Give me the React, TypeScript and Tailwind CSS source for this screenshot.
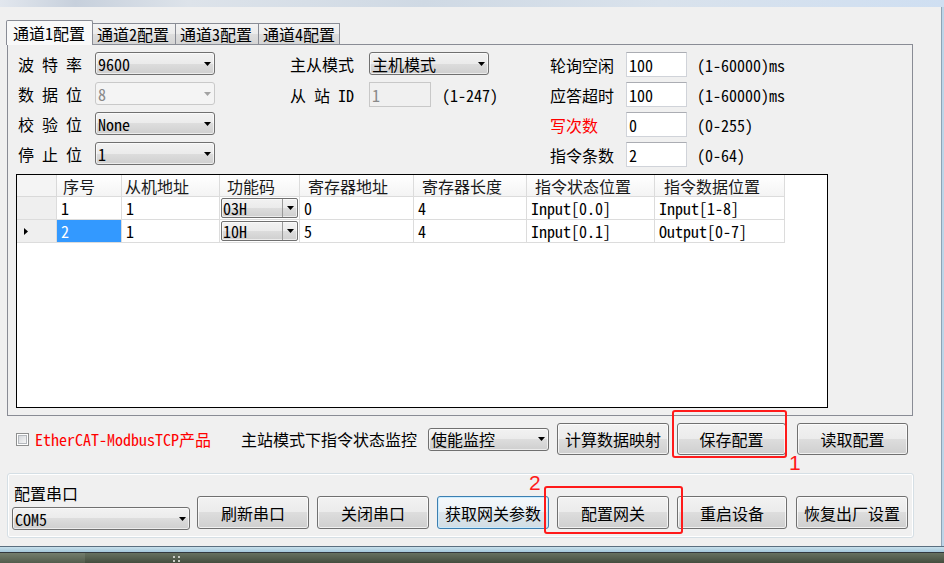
import React from "react";

const F = "font-['Noto_Sans_Mono_CJK_SC','Noto_Sans_CJK_SC',sans-serif]";
const BTN_BG = "bg-[linear-gradient(to_bottom,#f2f2f2,#ebebeb_50%,#dddddd_50%,#cfcfcf)]";

function Arrow({ gray = false }: { gray?: boolean }) {
  return (
    <svg width="7" height="4" viewBox="0 0 7 4" className="shrink-0">
      <path d="M0 0H7L3.5 4Z" fill={gray ? "#a3a3a3" : "#000"} />
    </svg>
  );
}

function Combo({ value, className = "", disabled = false }: { value: string; className?: string; disabled?: boolean }) {
  return (
    <div
      className={`flex items-center justify-between rounded-[3px] border pl-[2px] pr-[3px] ${
        disabled
          ? "border-[#c9c9c9] bg-[#f4f4f4] text-[#8a8a8a]"
          : "border-[#707070] bg-[linear-gradient(to_bottom,#f2f2f2,#ebebeb_50%,#dddddd_50%,#cfcfcf)] shadow-[inset_0_0_0_1px_rgba(255,255,255,0.6)]"
      } ${className}`}
    >
      <span className="leading-[18px]">{value}</span>
      <Arrow gray={disabled} />
    </div>
  );
}

function TextBox({ value, className = "", disabled = false }: { value: string; className?: string; disabled?: boolean }) {
  return (
    <div
      className={`flex items-center border pl-[2px] leading-[18px] ${
        disabled ? "border-[#c8c8c8] bg-[#f0f0f0] text-[#8a8a8a]" : "border-[#d0d3d9] border-t-[#abadb3] bg-white"
      } ${className}`}
    >
      {value}
    </div>
  );
}

function Btn({ label, className = "", focus = false }: { label: string; className?: string; focus?: boolean }) {
  return (
    <div
      className={`flex items-center justify-center rounded-[3px] border leading-[18px] ${
        focus
          ? "border-[#3c7fb1] bg-[linear-gradient(to_bottom,#f4f8fb,#eaf1f6_50%,#dde6ec_50%,#d2dde4)] shadow-[inset_0_0_0_1px_rgba(200,235,255,0.9)]"
          : "border-[#707070] bg-[linear-gradient(to_bottom,#f2f2f2,#ebebeb_50%,#dddddd_50%,#cfcfcf)] shadow-[inset_0_0_0_1px_rgba(255,255,255,0.7)]"
      } ${className}`}
    >
      {label}
    </div>
  );
}

function Spaced({ chars, className = "" }: { chars: string[]; className?: string }) {
  return (
    <div className={`flex w-[64px] justify-between ${className}`}>
      {chars.map((c, i) => (
        <span key={i}>{c}</span>
      ))}
    </div>
  );
}

function CellCombo({ value }: { value: string }) {
  return (
    <div className="flex h-full w-full items-stretch rounded-[2px] border border-[#707070] bg-[linear-gradient(to_bottom,#f2f2f2,#ebebeb_50%,#dddddd_50%,#cfcfcf)] shadow-[inset_0_0_0_1px_rgba(255,255,255,0.6)]">
      <div className="flex flex-1 items-center pl-[1px] leading-[18px]">{value}</div>
      <div className="flex w-[15px] items-center justify-center border-l border-[#9a9a9a]">
        <Arrow />
      </div>
    </div>
  );
}

const colW = ["w-[65px]", "w-[98px]", "w-[80px]", "w-[114px]", "w-[113px]", "w-[128px]", "w-[130px]"];
const headPl = ["pl-[6px]", "pl-[3px]", "pl-[7px]", "pl-[8px]", "pl-[8px]", "pl-[8px]", "pl-[9px]"];
const heads = ["序号", "从机地址", "功能码", "寄存器地址", "寄存器长度", "指令状态位置", "指令数据位置"];
const rows = [
  ["1", "1", "03H", "0", "4", "Input[0.0]", "Input[1-8]"],
  ["2", "1", "10H", "5", "4", "Input[0.1]", "Output[0-7]"],
];

export default function App() {
  return (
    <div className={`${F} flex h-[563px] w-[944px] flex-col overflow-hidden bg-[#f0f0f0] text-[16px] leading-[18px] text-black`}>
      {/* top title strip */}
      <div className="h-[7px] shrink-0 bg-[linear-gradient(to_right,#e2e7ee,#c7d0dc_8%,#dde3ea_20%,#cfd9e4_45%,#d9e2ec_70%,#cfdff2)]" />

      <div className="flex min-h-0 flex-1">
        <div className="flex w-[941px] flex-col">
          {/* tabs */}
          <div className="mt-[13px] flex h-[24px] items-end pl-[6px]">
            <div className="relative z-10 -mb-[1px] flex h-[25px] w-[87px] items-center rounded-t-[2px] border border-b-0 border-[#898c95] bg-[#f9f9f9] pl-[6px]">
              通道1配置
            </div>
            <div className="flex h-[21px] w-[83px] items-center border border-l-0 border-b-0 border-[#898c95] bg-[linear-gradient(to_bottom,#f3f3f3,#ebebeb_50%,#dedede_50%,#d4d4d4)] pl-[4px]">
              通道2配置
            </div>
            <div className="flex h-[21px] w-[83px] items-center border border-l-0 border-b-0 border-[#898c95] bg-[linear-gradient(to_bottom,#f3f3f3,#ebebeb_50%,#dedede_50%,#d4d4d4)] pl-[4px]">
              通道3配置
            </div>
            <div className="flex h-[21px] w-[81px] items-center border border-l-0 border-b-0 border-[#898c95] bg-[linear-gradient(to_bottom,#f3f3f3,#ebebeb_50%,#dedede_50%,#d4d4d4)] pl-[4px]">
              通道4配置
            </div>
          </div>

          {/* tab panel */}
          <div className="ml-[7px] flex h-[372px] w-[906px] flex-col border border-[#898c95] bg-[#f0f0f0]">
            {/* form */}
            <div className="flex h-[129px] pl-[10px] pt-[7px]">
              {/* left column */}
              <div className="flex w-[272px] flex-col gap-[7px]">
                <div className="flex h-[23px] items-center">
                  <div className="w-[77px]"><Spaced chars={["波", "特", "率"]} /></div>
                  <Combo value="9600" className="h-[23px] w-[120px]" />
                </div>
                <div className="flex h-[23px] items-center">
                  <div className="w-[77px]"><Spaced chars={["数", "据", "位"]} /></div>
                  <Combo value="8" disabled className="h-[23px] w-[120px]" />
                </div>
                <div className="flex h-[23px] items-center">
                  <div className="w-[77px]"><Spaced chars={["校", "验", "位"]} /></div>
                  <Combo value="None" className="h-[23px] w-[120px]" />
                </div>
                <div className="flex h-[23px] items-center">
                  <div className="w-[77px]"><Spaced chars={["停", "止", "位"]} /></div>
                  <Combo value="1" className="h-[23px] w-[120px]" />
                </div>
              </div>

              {/* middle column */}
              <div className="flex w-[260px] flex-col">
                <div className="flex h-[23px] items-center">
                  <div className="w-[79px]">主从模式</div>
                  <Combo value="主机模式" className="h-[23px] w-[120px]" />
                </div>
                <div className="mt-[7px] flex h-[25px] items-center">
                  <div className="w-[79px]"><Spaced chars={["从", "站", "ID"]} /></div>
                  <TextBox value="1" disabled className="h-[25px] w-[62px]" />
                  <span className="ml-[11px]">(1-247)</span>
                </div>
              </div>

              {/* right column */}
              <div className="flex flex-col gap-[5px]">
                <div className="flex h-[25px] items-center">
                  <div className="w-[76px]">轮询空闲</div>
                  <TextBox value="100" className="h-[25px] w-[61px]" />
                  <span className="ml-[10px]">(1-60000)ms</span>
                </div>
                <div className="flex h-[25px] items-center">
                  <div className="w-[76px]">应答超时</div>
                  <TextBox value="100" className="h-[25px] w-[61px]" />
                  <span className="ml-[10px]">(1-60000)ms</span>
                </div>
                <div className="flex h-[25px] items-center">
                  <div className="w-[76px] text-[#ff0000]">写次数</div>
                  <TextBox value="0" className="h-[25px] w-[61px]" />
                  <span className="ml-[10px]">(0-255)</span>
                </div>
                <div className="flex h-[25px] items-center">
                  <div className="w-[76px]">指令条数</div>
                  <TextBox value="2" className="h-[25px] w-[61px]" />
                  <span className="ml-[10px]">(0-64)</span>
                </div>
              </div>
            </div>

            {/* data grid */}
            <div className="ml-[8px] flex h-[234px] w-[812px] flex-col border border-black bg-white">
              <div className="flex h-[22px] shrink-0">
                <div className="h-full w-[40px] border-r border-b border-[#d9d9d9] bg-[#f4f4f4]" />
                {heads.map((h, i) => (
                  <div key={h} className={`flex h-full items-center border-r border-b border-[#dcdcdc] bg-[linear-gradient(to_bottom,#ffffff,#f4f4f4)] text-[#1a1a1a] ${colW[i]} ${headPl[i]}`}>
                    {h}
                  </div>
                ))}
              </div>
              {rows.map((r, ri) => (
                <div key={ri} className="flex h-[23px] shrink-0">
                  <div className="flex h-full w-[40px] items-center border-r border-b border-[#dcdcdc] bg-[#efefef] pl-[7px]">
                    {ri === 1 && (
                      <svg width="4" height="7" viewBox="0 0 4 7">
                        <path d="M0 0L4 3.5L0 7Z" fill="#000" />
                      </svg>
                    )}
                  </div>
                  {r.map((v, ci) =>
                    ci === 2 ? (
                      <div key={ci} className={`h-full border-r border-b border-[#dcdcdc] p-[1px] ${colW[ci]}`}>
                        <CellCombo value={v} />
                      </div>
                    ) : (
                      <div
                        key={ci}
                        className={`flex h-full items-center border-r border-b border-[#dcdcdc] pl-[4px] ${colW[ci]} ${
                          ri === 1 && ci === 0 ? "bg-[#3399ff] text-white" : ""
                        }`}
                      >
                        {v}
                      </div>
                    )
                  )}
                </div>
              ))}
            </div>
          </div>

          {/* controls row below panel */}
          <div className="mt-[7px] flex h-[32px] items-center">
            <div className="ml-[16px] h-[13px] w-[13px] border border-[#8e8f8f] bg-white p-[1px]">
              <div className="h-full w-full border border-[#b4b8bd] bg-[linear-gradient(135deg,#d6d9dd,#f5f5f5)]" />
            </div>
            <span className="ml-[6px] text-[#ff0000]">EtherCAT-ModbusTCP产品</span>
            <span className="ml-[30px]">主站模式下指令状态监控</span>
            <Combo value="使能监控" className="ml-[11px] h-[23px] w-[121px]" />
            <Btn label="计算数据映射" className="ml-[8px] h-[32px] w-[112px]" />
            <div className="relative ml-[8px]">
              <Btn label="保存配置" className="h-[32px] w-[109px]" />
              <div className="absolute left-[-5px] top-[-13px] h-[48px] w-[115px] rounded-[3px] border-2 border-[#ff1a1a]" />
              <span className="absolute left-[112px] top-[31px] font-['Liberation_Sans',sans-serif] text-[21px] leading-[18px] text-[#ff1a1a]">1</span>
            </div>
            <Btn label="读取配置" className="ml-[11px] h-[32px] w-[111px]" />
          </div>

          {/* group box */}
          <div className="ml-[7px] mt-[18px] flex h-[65px] w-[907px] items-start rounded-[3px] border border-[#d5dfe5] shadow-[inset_0_0_0_1px_#ffffff]">
            <div className="ml-[4px] flex w-[178px] flex-col">
              <div className="mt-[9px] h-[20px] pl-[2px] leading-[20px]">配置串口</div>
              <Combo value="COM5" className="mt-[4px] h-[23px] w-[178px]" />
            </div>
            <Btn label="刷新串口" className="ml-[7px] mt-[22px] h-[33px] w-[112px]" />
            <Btn label="关闭串口" className="ml-[8px] mt-[22px] h-[33px] w-[112px]" />
            <Btn label="获取网关参数" focus className="ml-[8px] mt-[22px] h-[33px] w-[112px]" />
            <div className="relative ml-[8px] mt-[22px]">
              <Btn label="配置网关" className="h-[33px] w-[112px]" />
              <div className="absolute left-[-13px] top-[-10px] h-[48px] w-[139px] rounded-[3px] border-2 border-[#ff1a1a]" />
              <span className="absolute left-[-28px] top-[-22px] font-['Liberation_Sans',sans-serif] text-[21px] leading-[18px] text-[#ff1a1a]">2</span>
            </div>
            <Btn label="重启设备" className="ml-[8px] mt-[22px] h-[33px] w-[110px]" />
            <Btn label="恢复出厂设置" className="ml-[9px] mt-[22px] h-[33px] w-[112px]" />
          </div>
          <div className="flex-1" />
        </div>
        <div className="w-[1px] bg-[#8fa3b5]" />
        <div className="w-[2px] bg-[#bcd5e8]" />
      </div>

      {/* bottom window frame + desktop */}
      <div className="flex h-[17px] shrink-0 flex-col">
        <div className="h-[1px] bg-[#5b6f80]" />
        <div className="h-[5px] bg-[linear-gradient(to_bottom,#c8e0ec,#a4c8da)]" />
        <div className="h-[1px] bg-[#33393d]" />
        <div className="flex flex-1">
          <div className="w-[85px] bg-[linear-gradient(to_bottom,#737e6d,#535c4c)]" />
          <div className="relative flex-1 bg-[linear-gradient(to_bottom,#66715f,#444d3e)]">
            <div className="absolute left-[88px] top-[3px] grid grid-cols-2 gap-x-[3px] gap-y-[2px]">
              <span className="h-[2px] w-[2px] bg-[#c8ccc4]" />
              <span className="h-[2px] w-[2px] bg-[#c8ccc4]" />
              <span className="h-[2px] w-[2px] bg-[#c8ccc4]" />
              <span className="h-[2px] w-[2px] bg-[#c8ccc4]" />
            </div>
          </div>
        </div>
      </div>
    </div>
  );
}
